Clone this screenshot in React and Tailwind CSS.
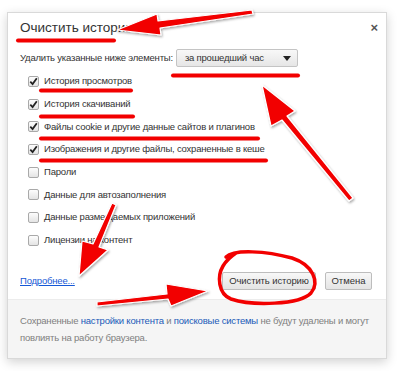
import React from "react";

const rows = [
  { label: "История просмотров", checked: true },
  { label: "История скачиваний", checked: true },
  { label: "Файлы cookie и другие данные сайтов и плагинов", checked: true },
  { label: "Изображения и другие файлы, сохраненные в кеше", checked: true },
  { label: "Пароли", checked: false },
  { label: "Данные для автозаполнения", checked: false },
  { label: "Данные размещаемых приложений", checked: false },
  { label: "Лицензии на контент", checked: false },
];

function Checkbox({ checked }) {
  return (
    <span className="w-[11px] h-[11px] rounded-[2px] border border-[#a9a9a9] bg-gradient-to-b from-[#fdfdfd] to-[#e4e4e4] flex items-center justify-center shrink-0">
      {checked && (
        <svg width="9" height="9" viewBox="0 0 9 9">
          <path d="M1.3 4.6 L3.6 7 L7.8 1.3" fill="none" stroke="#222" strokeWidth="1.8" />
        </svg>
      )}
    </span>
  );
}

// red marker annotations drawn over the screenshot
function Annotations() {
  const red = "#f20000";
  return (
    <svg className="absolute inset-0 pointer-events-none" width="400" height="371" viewBox="0 0 400 371">
      <defs>
        <filter id="sh" x="-10%" y="-10%" width="120%" height="120%">
          <feDropShadow dx="1" dy="1.5" stdDeviation="1" floodColor="#000" floodOpacity="0.35" />
        </filter>
      </defs>
      {/* underlines */}
      <g stroke={red} strokeWidth="4" strokeLinecap="round" fill="none">
        <line x1="18" y1="40.5" x2="114" y2="40.5" />
        <line x1="173" y1="75.5" x2="298" y2="75.5" />
        <line x1="41" y1="90.5" x2="131" y2="90.5" />
        <line x1="41" y1="116.5" x2="133" y2="116.5" />
        <line x1="41" y1="138.5" x2="258" y2="138.5" />
        <line x1="41" y1="160.5" x2="266" y2="160.5" />
      </g>
      {/* arrows */}
      <g fill={red} stroke="#fff" strokeWidth="1.2" strokeLinejoin="round" filter="url(#sh)">
        <polygon points="117,30 157,14 158,21 252,10 253,14 160,28 161,35" />
        <polygon points="262,85 295,111 287,116 353,198 349,201 282,120 271,126" />
        <polygon points="79,276 82,241 93,244 112,203 116,205 99,247 108,250" />
        <polygon points="208,291 166,284 167,294 97,302 97,306 168,299 171,306" />
      </g>
      {/* circle around button */}
      <path
        d="M226 257 C 234 249, 266 251, 292 258 C 313 265, 320 282, 311 293 C 300 305, 252 306, 231 299 C 218 294, 217 276, 223 266 C 226 261, 230 257, 236 253"
        fill="none"
        stroke={red}
        strokeWidth="3.5"
        strokeLinecap="round"
      />
    </svg>
  );
}

export default function App() {
  return (
    <div
      className="w-[400px] h-[371px] bg-white relative overflow-hidden pt-[12px] pl-[7px]"
      style={{ fontFamily: '"Liberation Sans", Arial, sans-serif' }}
    >
      <div className="w-[380px] h-[347px] bg-white border border-[#d9d9d9] shadow-[0_3px_10px_rgba(0,0,0,0.18)] flex flex-col">
        <div className="flex-1 flex flex-col pl-[12px] pr-[13px] pt-[5px]">
          <div className="flex items-start justify-between">
            <h1 className="h-[20px] leading-[20px] text-[13.5px] text-[#333]">Очистить историю</h1>
            <span className="text-[#555] text-[13px] font-bold leading-[10px] mt-[5px] -mr-[5px]">×</span>
          </div>

          <div className="mt-[11px] h-[18px] flex items-center text-[9.5px] tracking-[-0.2px] text-[#333]">
            <span>Удалить указанные ниже элементы:</span>
            <div className="ml-[3px] w-[122px] h-[18px] border border-[#c4c4c4] rounded-[2px] bg-gradient-to-b from-[#f8f8f8] to-[#e6e6e6] flex items-center justify-between pl-[8px] pr-[6px]">
              <span className="text-[9.5px] text-[#333]">за прошедший час</span>
              <svg width="8" height="5" viewBox="0 0 8 5">
                <path d="M0 0 H8 L4 5 Z" fill="#222" />
              </svg>
            </div>
          </div>

          <ul className="mt-[3px] pl-[8px] flex flex-col">
            {rows.map((r) => (
              <li key={r.label} className="h-[22.7px] flex items-center gap-[5px] text-[9.5px] tracking-[-0.2px] text-[#333]">
                <Checkbox checked={r.checked} />
                <span>{r.label}</span>
              </li>
            ))}
          </ul>

          <div className="mt-[20px] flex items-center justify-between">
            <a href="#" className="text-[9.5px] tracking-[-0.2px] text-[#1558d6] underline mt-[2px]">Подробнее...</a>
            <div className="flex gap-[9px] pr-[1px]">
              <button className="h-[18px] w-[94px] border border-[#bdbdbd] rounded-[2px] bg-gradient-to-b from-[#f8f8f8] to-[#e4e4e4] text-[9.5px] tracking-[-0.1px] text-[#333] leading-none">
                Очистить историю
              </button>
              <button className="h-[18px] w-[47px] border border-[#bdbdbd] rounded-[2px] bg-gradient-to-b from-[#f8f8f8] to-[#e4e4e4] text-[9.5px] text-[#333] leading-none">
                Отмена
              </button>
            </div>
          </div>
        </div>

        <div className="h-[59px] bg-[#f5f5f5] border-t border-[#ececec] pl-[12px] pr-[8px] pt-[12px] text-[9.5px] tracking-[-0.2px] leading-[17px] text-[#808080]">
          <p>
            Сохраненные <span className="text-[#1a5ab8]">настройки контента</span> и{" "}
            <span className="text-[#1a5ab8]">поисковые системы</span> не будут удалены и могут
          </p>
          <p>повлиять на работу браузера.</p>
        </div>
      </div>
      <Annotations />
    </div>
  );
}
